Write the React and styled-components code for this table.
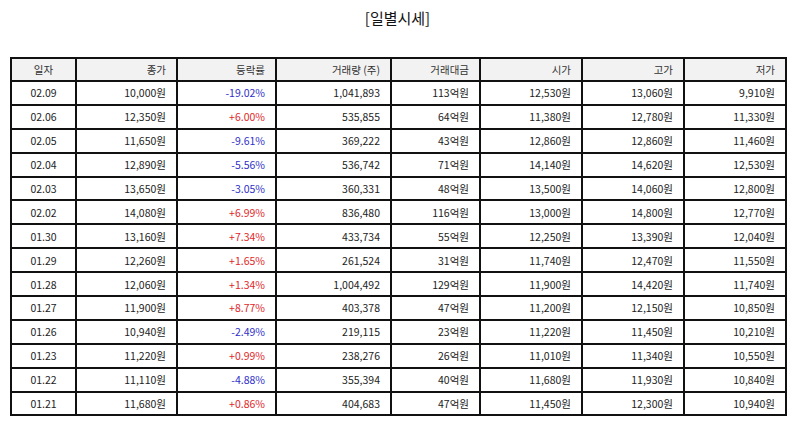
import React from 'react';
import styled, { createGlobalStyle } from 'styled-components';

const GlobalStyle = createGlobalStyle`
    html, body {
        margin: 0;
        padding: 0;
        background: #fff;
    }
    body {
        font-family: "Noto Sans CJK KR", "Noto Sans", sans-serif;
        color: #222;
    }
`

const Page = styled.div`
    width: 794px;
    height: 425px;
    padding: 6px 9px 0 10px;
    box-sizing: border-box;
`

const Title = styled.h1`
    margin: 0 0 27px;
    font-size: 15px;
    font-weight: 400;
    line-height: 24px;
    text-align: center;
    color: #111;
`

const Table = styled.table`
    width: 775px;
    table-layout: fixed;
    border-collapse: collapse;
    font-size: 10.5px;
`

const Col = styled.col`
    width: ${props => props.w}px;
`

const HeadRow = styled.tr`
    height: 23px;
`

const Row = styled.tr`
    height: 23.9px;
`

const Head = styled.th`
    box-sizing: border-box;
    padding: 0 10px;
    border: 2px solid #111;
    background: #f2f2f2;
    font-weight: 400;
    color: #333;
    text-align: ${props => props.center ? 'center' : 'right'};
`

const Cell = styled.td`
    box-sizing: border-box;
    padding: 0 10px;
    border: 2px solid #111;
    text-align: ${props => props.center ? 'center' : 'right'};
    color: ${props => props.tone === 'up' ? '#e0272a' : props.tone === 'down' ? '#2f2fc8' : '#222'};
    white-space: nowrap;
`

const columns = [
    { label: '일자', w: 65, center: true },
    { label: '종가', w: 101 },
    { label: '등락률', w: 99 },
    { label: '거래량 (주)', w: 115 },
    { label: '거래대금', w: 89 },
    { label: '시가', w: 102 },
    { label: '고가', w: 102 },
    { label: '저가', w: 102 },
]

const rows = [
    ['02.09', '10,000원', '-19.02%', '1,041,893', '113억원', '12,530원', '13,060원', '9,910원'],
    ['02.06', '12,350원', '+6.00%', '535,855', '64억원', '11,380원', '12,780원', '11,330원'],
    ['02.05', '11,650원', '-9.61%', '369,222', '43억원', '12,860원', '12,860원', '11,460원'],
    ['02.04', '12,890원', '-5.56%', '536,742', '71억원', '14,140원', '14,620원', '12,530원'],
    ['02.03', '13,650원', '-3.05%', '360,331', '48억원', '13,500원', '14,060원', '12,800원'],
    ['02.02', '14,080원', '+6.99%', '836,480', '116억원', '13,000원', '14,800원', '12,770원'],
    ['01.30', '13,160원', '+7.34%', '433,734', '55억원', '12,250원', '13,390원', '12,040원'],
    ['01.29', '12,260원', '+1.65%', '261,524', '31억원', '11,740원', '12,470원', '11,550원'],
    ['01.28', '12,060원', '+1.34%', '1,004,492', '129억원', '11,900원', '14,420원', '11,740원'],
    ['01.27', '11,900원', '+8.77%', '403,378', '47억원', '11,200원', '12,150원', '10,850원'],
    ['01.26', '10,940원', '-2.49%', '219,115', '23억원', '11,220원', '11,450원', '10,210원'],
    ['01.23', '11,220원', '+0.99%', '238,276', '26억원', '11,010원', '11,340원', '10,550원'],
    ['01.22', '11,110원', '-4.88%', '355,394', '40억원', '11,680원', '11,930원', '10,840원'],
    ['01.21', '11,680원', '+0.86%', '404,683', '47억원', '11,450원', '12,300원', '10,940원'],
]

const toneOf = (value, index) => {
    if (index !== 2) return null
    return value.startsWith('+') ? 'up' : 'down'
}

const App = () => {
    return (
        <Page>
            <GlobalStyle />
            <Title>[일별시세]</Title>
            <Table>
                <colgroup>
                    {columns.map(col => <Col key={col.label} w={col.w} />)}
                </colgroup>
                <thead>
                    <HeadRow>
                        {columns.map(col => (
                            <Head key={col.label} center={col.center}>{col.label}</Head>
                        ))}
                    </HeadRow>
                </thead>
                <tbody>
                    {rows.map(row => (
                        <Row key={row[0]}>
                            {row.map((value, i) => (
                                <Cell key={i} center={columns[i].center} tone={toneOf(value, i)}>{value}</Cell>
                            ))}
                        </Row>
                    ))}
                </tbody>
            </Table>
        </Page>
    )
}

export default App
